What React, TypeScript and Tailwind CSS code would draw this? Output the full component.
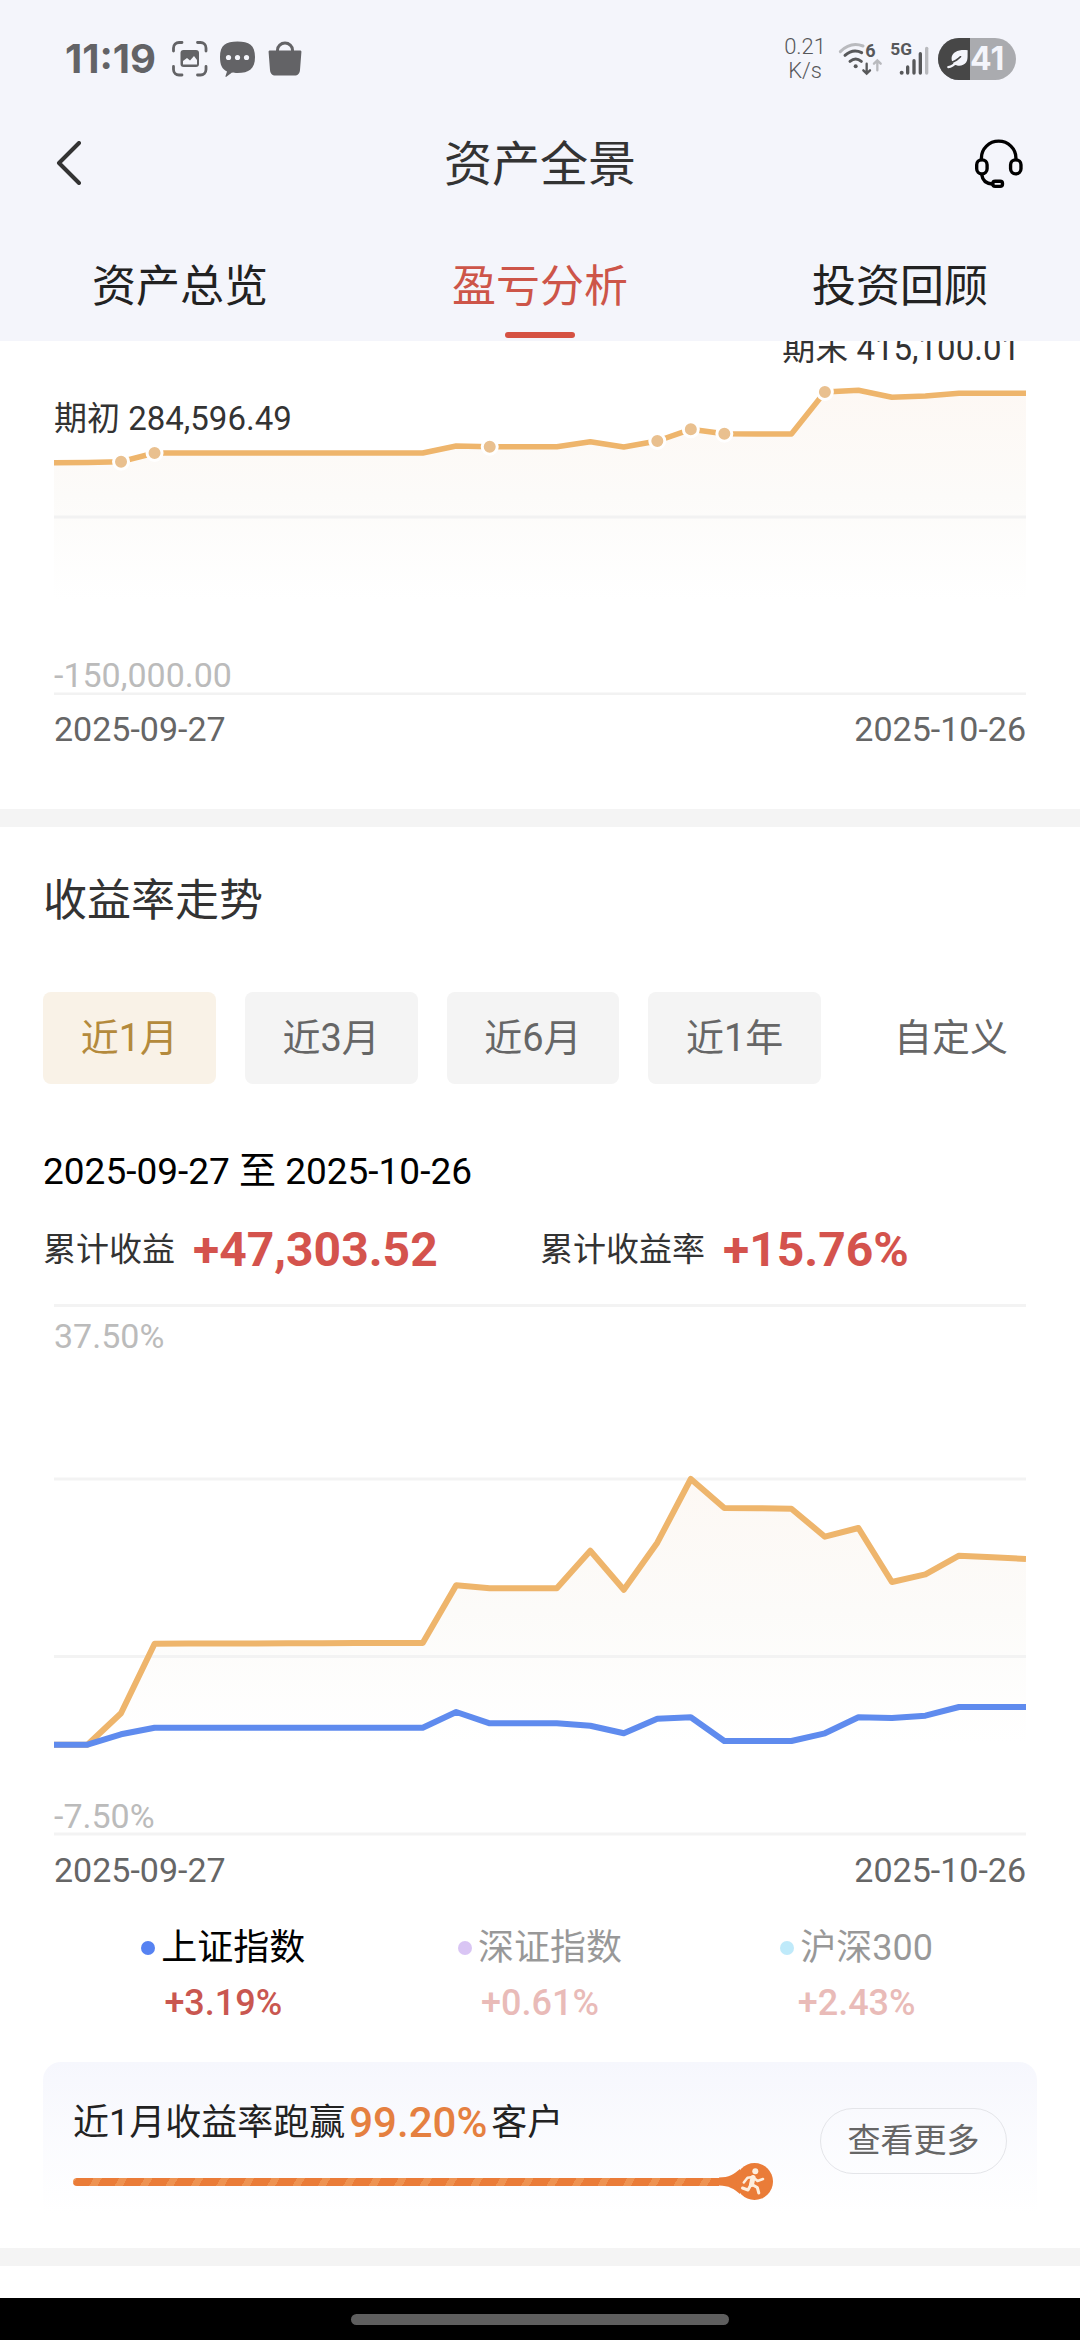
const tabs = ["资产总览", "盈亏分析", "投资回顾"];
const ranges = ["近1月", "近3月", "近6月", "近1年"];

const indexes = [
    { name: "上证指数", value: "+3.19%", dot: "bg-[#5682f2]", active: true },
    { name: "深证指数", value: "+0.61%", dot: "bg-[#a270e6]", active: false },
    { name: "沪深300", value: "+2.43%", dot: "bg-[#62cbf4]", active: false },
];

// one value per day, measured down from the top of the chart
const assets = [
    121.7, 121.5, 120.7, 112, 112, 112, 112, 112, 112, 112, 112, 112, 105, 105.7, 105.7,
    105.7, 100.7, 106, 100, 88.3, 92.7, 93, 93, 51, 49.3, 56.3, 55, 52.3, 52.3, 52.3,
];
const assetDots = [2, 3, 13, 18, 19, 20, 23];

const mine = [
    440.7, 440.7, 409.3, 339.7, 339.6, 339.5, 339.4, 339.3, 339.2, 339.1, 339, 339, 281.3, 284.3, 284.3,
    284.3, 246.7, 285.7, 238.7, 175, 204, 204.3, 204.7, 232.7, 224, 278, 270.3, 251.7, 253.3, 255,
];
const market = [
    440.7, 440.7, 430.3, 423.7, 423.7, 423.7, 423.7, 423.7, 423.7, 423.7, 423.7, 423.7, 408, 419.3, 419.3,
    419.3, 421.7, 429.3, 414.7, 413.3, 437, 437, 437, 429.3, 413.3, 414, 411.7, 403, 403, 403,
];

const CHART_WIDTH = 972;

function xAt(i: number) {
    return (i * CHART_WIDTH) / 29;
}

function linePoints(values: number[]) {
    return values.map((y, i) => `${xAt(i).toFixed(1)},${y}`).join(" ");
}

function areaPoints(values: number[], base: number) {
    return `0,${base} ${linePoints(values)} ${CHART_WIDTH},${base}`;
}

function ScanIcon() {
    return (
        <svg className="size-9" viewBox="0 0 36 36" fill="none">
            <path d="M1.5 10V7A5.5 5.5 0 0 1 7 1.5h3M25.5 1.5h3A5.5 5.5 0 0 1 34 7v3M34 25.5v3a5.5 5.5 0 0 1-5.5 5.5h-3M10 34H7a5.5 5.5 0 0 1-5.5-5.5v-3" stroke="#636366" strokeWidth="2.8" strokeLinecap="round" />
            <rect x="8.5" y="9" width="18.5" height="17" rx="3" fill="#636366" />
            <path d="M11 23.5v-3.5l4-3 3 2.5 4-4.5 3 4v4.5z" fill="#f4f5fb" />
        </svg>
    );
}

function ChatIcon() {
    return (
        <svg className="size-9" viewBox="0 0 36 36">
            <path d="M17.5 .5C29 .5 35 4 35 16S29 32 17.5 32c-2 0-4 0-5.5-.4L6 36c-.7-.2-.6-1-.3-1.5L7 30.5C2 28 0 24 0 16 0 4 6 .5 17.5 .5z" fill="#636366" />
            <circle cx="8.5" cy="16.5" r="2.6" fill="#f4f5fb" />
            <circle cx="17.5" cy="16.5" r="2.6" fill="#f4f5fb" />
            <circle cx="26.5" cy="16.5" r="2.6" fill="#f4f5fb" />
        </svg>
    );
}

function BagIcon() {
    return (
        <svg className="size-9" viewBox="0 0 36 36">
            <path d="M2 9.5h30c1 0 1.5.5 1.4 1.5L32 29c-.3 3.5-2 5.5-5.5 5.5h-19C4 34.5 2.3 32.5 2 29L.6 11c-.1-1 .4-1.5 1.4-1.5z" fill="#636366" />
            <path d="M9.5 11V9a7.5 7 0 0 1 15 0v2" fill="none" stroke="#636366" strokeWidth="3" />
        </svg>
    );
}

function WifiIcon() {
    return (
        <svg className="h-[46px] w-11" viewBox="198 19 132 138" fill="none" strokeLinecap="round">
            <path d="M205 66Q236 35 273 49" stroke="#b9babe" strokeWidth="9" />
            <path d="M219 77Q243 56 269 69" stroke="#57585a" strokeWidth="9" />
            <path d="M234 95Q251 81 268 95" stroke="#57585a" strokeWidth="9" />
            <circle cx="251" cy="110" r="6" fill="#57585a" />
            <path d="M284 102V130M274 122L284 132L294 122" stroke="#57585a" strokeWidth="7" />
            <path d="M316 122V94M306 102L316 92L326 102" stroke="#b9babe" strokeWidth="7" />
            <text x="280" y="82" className="font-bold" fontSize="54" fill="#57585a">6</text>
        </svg>
    );
}

function SignalIcon() {
    return (
        <svg className="h-[46px] w-10" viewBox="354 19 120 138" strokeLinecap="round" strokeWidth="10">
            <text x="355" y="76" className="font-bold" fontSize="52" fill="#57585a">5G</text>
            <circle cx="389" cy="129" r="6" fill="#57585a" />
            <path d="M407 112V130M426 93V130M445 72V130" stroke="#57585a" />
            <path d="M464 56V130" stroke="#b9babe" />
        </svg>
    );
}

function Battery() {
    return (
        <div className="flex h-[42px] w-[78px] overflow-hidden rounded-full bg-[#aaabaf]">
            <div className="flex w-8 items-center justify-end bg-[#474747]">
                <svg className="h-5 w-6" viewBox="524 56 68 62">
                    <path d="M588 60C562 57 540 64 538 84C538 92 540 98 546 103C558 111 576 108 583 98C590 88 587 76 588 60Z" fill="#f4f5fb" />
                    <path d="M528 112C540 111 547 104 556 94" fill="none" stroke="#f4f5fb" strokeWidth="7" strokeLinecap="round" />
                    <path d="M538 97C550 96 556 88 566 80" fill="none" stroke="#474747" strokeWidth="5" strokeLinecap="round" />
                </svg>
            </div>
            <span className="font-[Inter,sans-serif] text-[32px] leading-[42px] font-bold text-[#f4f5fb]">41</span>
        </div>
    );
}

function StatusBar() {
    return (
        <div className="flex h-[118px] items-center justify-between pr-16 pl-[65px]">
            <div className="flex items-center gap-3">
                <span className="mr-1 font-[Inter,sans-serif] text-[40px] leading-10 font-bold text-[#636366]">11:19</span>
                <ScanIcon />
                <ChatIcon />
                <BagIcon />
            </div>
            <div className="flex items-center gap-2">
                <div className="mr-1 text-center text-[22px] leading-6 font-light text-[#57585a]">
                    <div>0.21</div>
                    <div>K/s</div>
                </div>
                <WifiIcon />
                <SignalIcon />
                <Battery />
            </div>
        </div>
    );
}

function TitleBar() {
    return (
        <div className="flex h-[90px] items-center justify-between px-14">
            <button aria-label="返回" className="w-[51px]">
                <svg className="h-11 w-7" viewBox="0 0 28 44" fill="none" stroke="#333" strokeWidth="4" strokeLinecap="round" strokeLinejoin="round">
                    <path d="M23 2L3 22L23 42" />
                </svg>
            </button>
            <h1 className="pt-1 text-[48px] leading-[60px] text-[#333]">资产全景</h1>
            <button aria-label="客服">
                <svg className="size-[51px]" viewBox="610 324 152 152" fill="none" stroke="#000" strokeWidth="10" strokeLinecap="round">
                    <path d="M635 388V384A51 50 0 0 1 738 384V388" />
                    <rect x="621" y="389" width="31" height="42" rx="15" />
                    <rect x="722" y="389" width="31" height="42" rx="15" />
                    <path d="M636 433C638 448 648 460 667 461" />
                    <rect x="669" y="453" width="29" height="15" rx="7" />
                </svg>
            </button>
        </div>
    );
}

function Tabs() {
    return (
        <nav className="grid h-[133px] grid-cols-3 items-end pb-[3px]">
            {tabs.map((tab, i) => (
                <button key={tab} className="flex flex-col items-center gap-[22px]">
                    <span className={i === 1 ? "text-[44px] leading-[46px] text-[#cd5549]" : "text-[44px] leading-[46px] text-[#222]"}>{tab}</span>
                    <span className={i === 1 ? "h-[6px] w-[70px] rounded-full bg-[#d55142]" : "h-[6px] w-[70px]"} />
                </button>
            ))}
        </nav>
    );
}

function DateAxis() {
    return (
        <div className="flex justify-between pt-[10px] text-[34px] leading-12 text-[#666]">
            <span>2025-09-27</span>
            <span>2025-10-26</span>
        </div>
    );
}

function AssetChart() {
    return (
        <section className="overflow-hidden px-[54px] pb-14">
            <div className="relative">
                <svg className="block h-[354px] w-full" viewBox="0 0 972 354" preserveAspectRatio="none" fill="none">
                    <defs>
                        <linearGradient id="assetFill" gradientUnits="userSpaceOnUse" x1="0" y1="50" x2="0" y2="260">
                            <stop offset="0" stopColor="#fdf8f4" />
                            <stop offset="0.5" stopColor="#fcfbf9" />
                            <stop offset="1" stopColor="#fff" />
                        </linearGradient>
                    </defs>
                    <polygon points={areaPoints(assets, 260)} fill="url(#assetFill)" />
                    <path d="M0 176H972M0 353H972" stroke="#f2f2f2" strokeWidth="3" />
                    <polyline points={linePoints(assets)} stroke="#eeb56c" strokeWidth="5.5" strokeLinejoin="round" />
                    {assetDots.map((i) => (
                        <circle key={i} cx={xAt(i)} cy={assets[i]} r="7.5" fill="#e9c08f" stroke="#fff" strokeWidth="3" />
                    ))}
                </svg>
                <span className="absolute top-[54px] left-0 text-[33px] leading-12 text-[#333]">期初 284,596.49</span>
                <span className="absolute -top-4 right-[6px] text-[33px] leading-12 text-[#333]">期末 415,100.01</span>
                <span className="absolute bottom-0 left-0 text-[34px] leading-10 text-[#bbb]">-150,000.00</span>
            </div>
            <DateAxis />
        </section>
    );
}

function RangePicker() {
    return (
        <div className="mt-[61px] flex gap-11 text-[38px] leading-[92px] text-[#666]">
            <div className="grid flex-1 grid-cols-4 gap-[29px]">
                {ranges.map((range, i) => (
                    <button key={range} className={i === 0 ? "rounded-lg bg-[#f9f2e7] text-[#b48a3c]" : "rounded-lg bg-[#f4f4f4]"}>
                        {range}
                    </button>
                ))}
            </div>
            <button className="w-[172px]">自定义</button>
        </div>
    );
}

function Summary({ label, value }: { label: string; value: string }) {
    return (
        <div className="flex items-center gap-[18px]">
            <span className="text-[33px] text-[#333]">{label}</span>
            <span className="text-[48px] font-bold text-[#d4534d]">{value}</span>
        </div>
    );
}

function YieldChart() {
    return (
        <div className="mt-6 px-[11px]">
            <div className="relative">
                <svg className="block h-[532px] w-full" viewBox="0 0 972 532" preserveAspectRatio="none" fill="none">
                    <defs>
                        <linearGradient id="yieldFill" gradientUnits="userSpaceOnUse" x1="0" y1="175" x2="0" y2="440">
                            <stop offset="0" stopColor="#fdf8f4" />
                            <stop offset="0.5" stopColor="#fcfbf9" />
                            <stop offset="1" stopColor="#fff" />
                        </linearGradient>
                    </defs>
                    <polygon points={areaPoints(mine, 440)} fill="url(#yieldFill)" />
                    <path d="M0 1.5H972M0 175H972M0 352.5H972M0 530H972" stroke="#f3f3f3" strokeWidth="3" />
                    <polyline points={linePoints(mine)} stroke="#eeb56c" strokeWidth="6" strokeLinejoin="round" />
                    <polyline points={linePoints(market)} stroke="#5f8bee" strokeWidth="6" strokeLinejoin="round" />
                </svg>
                <span className="absolute top-2 left-0 text-[34px] leading-12 text-[#bbb]">37.50%</span>
                <span className="absolute bottom-0 left-0 text-[34px] leading-10 text-[#bbb]">-7.50%</span>
            </div>
            <DateAxis />
        </div>
    );
}

function Legend() {
    return (
        <div className="mt-[30px] grid grid-cols-3 px-[22px]">
            {indexes.map((item) => (
                <button key={item.name} className={item.active ? "flex flex-col items-center gap-[11px]" : "flex flex-col items-center gap-[11px] opacity-40"}>
                    <span className="flex items-center gap-[6px] text-[36px] leading-12 text-black">
                        <i className={`size-[14px] rounded-full ${item.dot}`} />
                        {item.name}
                    </span>
                    <span className="text-[36px] leading-10 font-medium text-[#c95750]">{item.value}</span>
                </button>
            ))}
        </div>
    );
}

function RankBar() {
    return (
        <div className="mt-4 flex items-center">
            <div className="h-2 flex-1 rounded-l-full bg-[repeating-linear-gradient(120deg,#ee9352_0px,#ee9352_3px,#ea7c38_3px,#ea7c38_18px,#ee9352_18px,#ee9352_22px)]" />
            <svg className="h-[37px] w-[54px]" viewBox="0 0 54 37" fill="none" strokeLinecap="round" strokeLinejoin="round">
                <path d="M0 14.5C10 14.5 15 11 21 6V31C15 26 10 22.5 0 22.5Z" fill="#ea7c38" />
                <circle cx="35.5" cy="18.5" r="18.5" fill="#ea7c38" />
                <circle cx="36.3" cy="8.3" r="3" fill="#fdeedd" />
                <path d="M24.8 19.5L28.5 14.8L34 14L38.5 18L44 16" stroke="#fdeedd" strokeWidth="2.5" />
                <path d="M34 14.5L32.5 21.5" stroke="#fdeedd" strokeWidth="5" />
                <path d="M32 21.5L29 27L23.5 25M33 21.5L38.3 24.5L39.8 30" stroke="#fdeedd" strokeWidth="3" />
            </svg>
        </div>
    );
}

function RankCard() {
    return (
        <div className="mt-[39px] flex gap-[47px] rounded-[18px] bg-linear-to-b from-[#f6f7fd] to-white to-90% px-[30px] pt-[37px] pb-[30px]">
            <div className="flex-1">
                <p className="flex items-center gap-1 text-[36px] leading-12 text-[#222]">
                    近1月收益率跑赢
                    <b className="text-[42px] font-medium text-[#e58040]">99.20%</b>
                    客户
                </p>
                <RankBar />
            </div>
            <button className="mt-[9px] h-[66px] w-[187px] rounded-full border border-[#e4e5e9] text-[33px] leading-[60px] text-[#666]">查看更多</button>
        </div>
    );
}

export default function App() {
    return (
        <div className="flex min-h-screen flex-col bg-white font-[Roboto,'Noto_Sans_CJK_SC',sans-serif]">
            <header className="relative z-10 bg-[#f4f5fb]">
                <StatusBar />
                <TitleBar />
                <Tabs />
            </header>
            <main className="flex-1">
                <AssetChart />
                <div className="h-[18px] bg-[#f4f4f4]" />
                <section className="px-[43px] pt-11 pb-[18px]">
                    <h2 className="text-[44px] leading-[60px] text-[#333]">收益率走势</h2>
                    <RangePicker />
                    <p className="mt-16 text-[37px] leading-12 text-black">2025-09-27 至 2025-10-26</p>
                    <div className="mt-6 grid grid-cols-2 leading-[60px]">
                        <Summary label="累计收益" value="+47,303.52" />
                        <Summary label="累计收益率" value="+15.76%" />
                    </div>
                    <YieldChart />
                    <Legend />
                    <RankCard />
                </section>
                <div className="h-[18px] bg-[#f4f4f4]" />
            </main>
            <footer className="flex h-[42px] items-center justify-center bg-black">
                <div className="h-[11px] w-[35%] rounded-full bg-[#5e5e5e]" />
            </footer>
        </div>
    );
}
